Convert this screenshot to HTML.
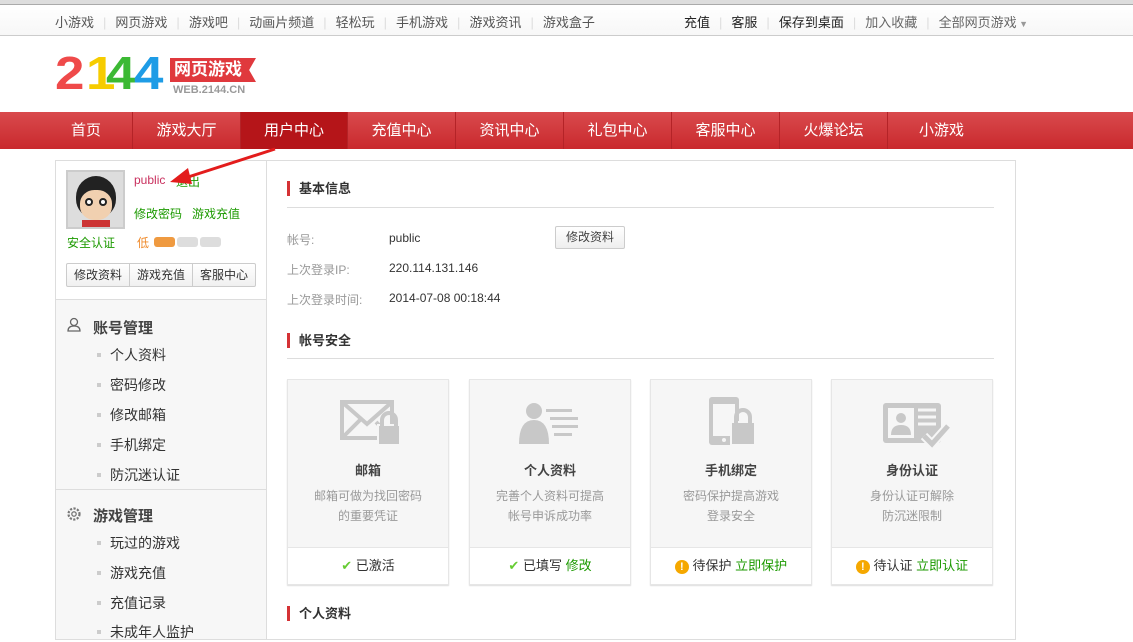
<!DOCTYPE html>
<html><head><meta charset="utf-8"><style>
*{margin:0;padding:0;box-sizing:border-box}
body{width:1133px;height:632px;overflow:hidden;background:#fff;font-family:"Liberation Sans","Noto Sans CJK SC",sans-serif;font-size:12px;color:#333;position:relative}
.a{position:absolute;white-space:nowrap}
.top{position:absolute;left:0;top:0;width:1133px;height:36px;background:linear-gradient(#fff,#f7f7f7);border-top:4px solid #ddd;border-bottom:1px solid #ccc}
.top:before{content:"";position:absolute;left:0;top:0;width:100%;height:1px;background:#aaa}
.sep{color:#ddd;margin:0 9px}
.nav{position:absolute;left:0;top:112px;width:1133px;height:37px;background:linear-gradient(#d94a4d,#c9292d)}
.ni{position:absolute;top:0;height:37px;line-height:37px;color:#fff;font-size:15px;text-align:center;border-left:1px solid #b42327}
.card{position:absolute;top:379px;width:162px;height:206px;border:1px solid #e6e6e6;background:#f6f6f6;text-align:center;box-shadow:0 1px 1px #ddd}
.card .b{position:absolute;left:0;bottom:0;width:100%;height:37px;background:#fff;border-top:1px solid #e6e6e6;line-height:36px;font-size:13px}
.card h4{position:absolute;top:80px;width:100%;font-size:13px;color:#444}
.card p{position:absolute;top:106px;width:100%;color:#999;font-size:12px;line-height:20px}
.g{color:#1c9a00}
.ttl{position:absolute;left:287px;font-size:13px;font-weight:bold;color:#333;border-left:3px solid #d53235;padding-left:9px;line-height:15px}
.hr{position:absolute;left:287px;width:707px;height:1px;background:#ddd}
.lbl{position:absolute;left:287px;color:#999}
.menu{position:absolute;left:110px;font-size:14px;color:#333}
.menu:before{content:"";position:absolute;left:-13px;top:8px;width:4px;height:4px;background:#ccc}
.dg{position:absolute;top:50px;font-size:46px;font-weight:900;line-height:46px;font-family:"Liberation Sans",sans-serif;transform:scaleX(1.15);transform-origin:left top}
</style></head><body>
<div class="top">
<div class="a" style="left:55px;top:8px;color:#555;font-size:13px">小游戏<span class="sep">|</span>网页游戏<span class="sep">|</span>游戏吧<span class="sep">|</span>动画片频道<span class="sep">|</span>轻松玩<span class="sep">|</span>手机游戏<span class="sep">|</span>游戏资讯<span class="sep">|</span>游戏盒子</div>
<div class="a" style="left:684px;top:8px;color:#222;font-size:13px">充值<span class="sep">|</span>客服<span class="sep">|</span>保存到桌面<span class="sep">|</span><span style="color:#666">加入收藏</span><span class="sep">|</span><span style="color:#666">全部网页游戏</span><span style="color:#999;font-size:9px"> ▼</span></div>
</div>
<div class="dg" style="left:55px;color:#ef4a4a">2</div>
<div class="dg" style="left:86px;color:#f6cc00">1</div>
<div class="dg" style="left:106px;color:#3cb934">4</div>
<div class="dg" style="left:134px;color:#1e9ce6">4</div>
<div class="a" style="left:170px;top:58px;width:86px;height:24px;background:#e0393d;color:#fff;font-size:17px;font-weight:bold;line-height:24px;padding-left:4px;clip-path:polygon(0 0,100% 0,92% 50%,100% 100%,0 100%)">网页游戏</div>
<div class="a" style="left:173px;top:84px;font-size:11px;font-weight:bold;color:#999">WEB.2144.CN</div>
<div class="nav">
<div class="ni" style="left:40px;width:92px;border-left:none">首页</div>
<div class="ni" style="left:132px;width:108px">游戏大厅</div>
<div class="ni" style="left:240px;width:107px;background:#b51519">用户中心</div>
<div class="ni" style="left:347px;width:108px">充值中心</div>
<div class="ni" style="left:455px;width:108px">资讯中心</div>
<div class="ni" style="left:563px;width:108px">礼包中心</div>
<div class="ni" style="left:671px;width:108px">客服中心</div>
<div class="ni" style="left:779px;width:108px">火爆论坛</div>
<div class="ni" style="left:887px;width:108px">小游戏</div>
</div>
<div class="a" style="left:55px;top:160px;width:212px;height:480px;border:1px solid #ddd;background:#f7f7f7"></div>
<div class="a" style="left:56px;top:161px;width:210px;height:139px;background:#fff;border-bottom:1px solid #ddd"></div>
<div class="a" style="left:66px;top:170px;width:59px;height:59px;border:2px solid #ccc;background:#ddd;overflow:hidden">
<div class="a" style="left:8px;top:4px;width:40px;height:42px;border-radius:50% 50% 45% 45%;background:#222"></div>
<div class="a" style="left:12px;top:18px;width:32px;height:30px;border-radius:45%;background:#f1d0b0"></div>
<div class="a" style="left:17px;top:26px;width:8px;height:8px;border-radius:50%;background:#fff;border:2px solid #222"></div>
<div class="a" style="left:31px;top:26px;width:8px;height:8px;border-radius:50%;background:#fff;border:2px solid #222"></div>
<div class="a" style="left:14px;top:48px;width:28px;height:10px;background:#c33"></div>
</div>
<div class="a" style="left:134px;top:173px;color:#c9305e">public</div>
<div class="a" style="left:176px;top:173px;color:#1c9a00">退出</div>
<div class="a" style="left:134px;top:205px;color:#1c9a00">修改密码&nbsp;&nbsp;&nbsp;游戏充值</div>
<div class="a" style="left:67px;top:234px;color:#1c9a00">安全认证</div>
<div class="a" style="left:137px;top:234px;color:#ef8a2a">低</div>
<div class="a" style="left:154px;top:237px;width:21px;height:10px;border-radius:3px;background:#ef9a40"></div>
<div class="a" style="left:177px;top:237px;width:21px;height:10px;border-radius:3px;background:#ddd"></div>
<div class="a" style="left:200px;top:237px;width:21px;height:10px;border-radius:3px;background:#ddd"></div>
<div class="a" style="left:66px;top:263px;width:190px;height:24px;border:1px solid #ccc;border-radius:2px;background:linear-gradient(#fff,#f0f0f0);display:flex;line-height:22px;font-size:12px;color:#333">
<div style="flex:1;text-align:center;border-right:1px solid #ccc">修改资料</div><div style="flex:1;text-align:center;border-right:1px solid #ccc">游戏充值</div><div style="flex:1;text-align:center">客服中心</div></div>
<svg class="a" style="left:66px;top:317px" width="16" height="16" viewBox="0 0 16 16"><circle cx="8" cy="5" r="3.5" fill="none" stroke="#666" stroke-width="1.3"/><path d="M2 14 Q2 9 8 9 Q14 9 14 14 Z" fill="none" stroke="#666" stroke-width="1.3"/></svg>
<div class="a" style="left:93px;top:317px;font-size:15px;font-weight:bold;color:#444">账号管理</div>
<div class="menu" style="top:345px">个人资料</div>
<div class="menu" style="top:375px">密码修改</div>
<div class="menu" style="top:405px">修改邮箱</div>
<div class="menu" style="top:435px">手机绑定</div>
<div class="menu" style="top:465px">防沉迷认证</div>
<div class="a" style="left:56px;top:489px;width:210px;height:1px;background:#ddd"></div>
<svg class="a" style="left:66px;top:506px" width="16" height="16" viewBox="0 0 16 16"><circle cx="8" cy="8" r="5.5" fill="none" stroke="#777" stroke-width="2.2" stroke-dasharray="2.2 1.4"/><circle cx="8" cy="8" r="2.2" fill="none" stroke="#777" stroke-width="1.3"/></svg>
<div class="a" style="left:93px;top:505px;font-size:15px;font-weight:bold;color:#444">游戏管理</div>
<div class="menu" style="top:533px">玩过的游戏</div>
<div class="menu" style="top:563px">游戏充值</div>
<div class="menu" style="top:593px">充值记录</div>
<div class="menu" style="top:622px">未成年人监护</div>
<div class="a" style="left:266px;top:160px;width:750px;height:480px;border:1px solid #ddd;background:#fff"></div>
<div class="ttl" style="top:181px">基本信息</div>
<div class="hr" style="top:207px"></div>
<div class="lbl" style="top:231px">帐号:</div><div class="a" style="left:389px;top:231px">public</div>
<div class="a" style="left:555px;top:226px;width:70px;height:23px;border:1px solid #ccc;border-radius:2px;background:linear-gradient(#fff,#eee);text-align:center;line-height:21px;color:#444">修改资料</div>
<div class="lbl" style="top:261px">上次登录IP:</div><div class="a" style="left:389px;top:261px">220.114.131.146</div>
<div class="lbl" style="top:291px">上次登录时间:</div><div class="a" style="left:389px;top:291px">2014-07-08 00:18:44</div>
<div class="ttl" style="top:333px">帐号安全</div>
<div class="hr" style="top:358px"></div>
<div class="card" style="left:287px">
<svg class="a" style="left:52px;top:20px" width="64" height="46" viewBox="0 0 64 46"><rect x="2" y="2" width="50" height="36" fill="none" stroke="#c8c8c8" stroke-width="4"/><path d="M2 2 L27 24 L52 2" fill="none" stroke="#c8c8c8" stroke-width="4"/><path d="M2 38 L20 20 M52 38 L36 22" stroke="#c8c8c8" stroke-width="4"/><rect x="38" y="25" width="22" height="20" fill="#c8c8c8" stroke="#f6f6f6" stroke-width="2"/><path d="M42 26 V20 a7 7 0 0 1 14 0 V26" fill="none" stroke="#c8c8c8" stroke-width="4"/></svg>
<h4>邮箱</h4><p>邮箱可做为找回密码<br>的重要凭证</p><div class="b"><span style="color:#6c3">✔</span> 已激活</div></div>
<div class="card" style="left:469px">
<svg class="a" style="left:48px;top:22px" width="62" height="44" viewBox="0 0 62 44"><circle cx="16" cy="9" r="8" fill="#c8c8c8"/><path d="M1 42 Q1 18 16 18 Q31 18 31 42 Z" fill="#c8c8c8"/><rect x="28" y="7" width="26" height="3" fill="#c8c8c8"/><rect x="32" y="15" width="28" height="3" fill="#c8c8c8"/><rect x="34" y="23" width="26" height="3" fill="#c8c8c8"/><rect x="36" y="31" width="18" height="3" fill="#c8c8c8"/></svg>
<h4>个人资料</h4><p>完善个人资料可提高<br>帐号申诉成功率</p><div class="b"><span style="color:#6c3">✔</span> 已填写 <span class="g">修改</span></div></div>
<div class="card" style="left:650px">
<svg class="a" style="left:56px;top:16px" width="50" height="50" viewBox="0 0 50 50"><rect x="2" y="1" width="30" height="48" rx="3" fill="#c8c8c8"/><rect x="6" y="8" width="22" height="32" fill="#f6f6f6"/><circle cx="17" cy="44" r="2" fill="#f6f6f6"/><rect x="24" y="26" width="24" height="23" fill="#c8c8c8" stroke="#f6f6f6" stroke-width="2"/><path d="M29 27 V21 a7 7 0 0 1 14 0 V27" fill="none" stroke="#c8c8c8" stroke-width="4"/></svg>
<h4>手机绑定</h4><p>密码保护提高游戏<br>登录安全</p><div class="b"><span style="display:inline-block;width:14px;height:14px;border-radius:50%;background:#f5a800;color:#fff;font-size:11px;line-height:14px;font-weight:bold">!</span> 待保护 <span class="g">立即保护</span></div></div>
<div class="card" style="left:831px">
<svg class="a" style="left:50px;top:22px" width="70" height="46" viewBox="0 0 70 46"><rect x="1" y="1" width="58" height="40" rx="3" fill="#c8c8c8"/><rect x="6" y="6" width="26" height="30" fill="#f6f6f6"/><circle cx="19" cy="16" r="5" fill="#c8c8c8"/><path d="M9 33 Q9 23 19 23 Q29 23 29 33Z" fill="#c8c8c8"/><path d="M36 8h18M36 15h18M36 22h18" stroke="#f6f6f6" stroke-width="3"/><path d="M42 34 L50 42 L66 24" fill="none" stroke="#f6f6f6" stroke-width="9"/><path d="M42 34 L50 42 L66 24" fill="none" stroke="#c8c8c8" stroke-width="5"/></svg>
<h4>身份认证</h4><p>身份认证可解除<br>防沉迷限制</p><div class="b"><span style="display:inline-block;width:14px;height:14px;border-radius:50%;background:#f5a800;color:#fff;font-size:11px;line-height:14px;font-weight:bold">!</span> 待认证 <span class="g">立即认证</span></div></div>
<div class="ttl" style="top:606px">个人资料</div>
<svg class="a" style="left:160px;top:140px" width="130" height="50" viewBox="0 0 130 50"><line x1="115" y1="9" x2="25" y2="38" stroke="#e31c1c" stroke-width="3"/><path d="M10 42 L28 28 L32 44 Z" fill="#e31c1c"/></svg>
</body></html>
